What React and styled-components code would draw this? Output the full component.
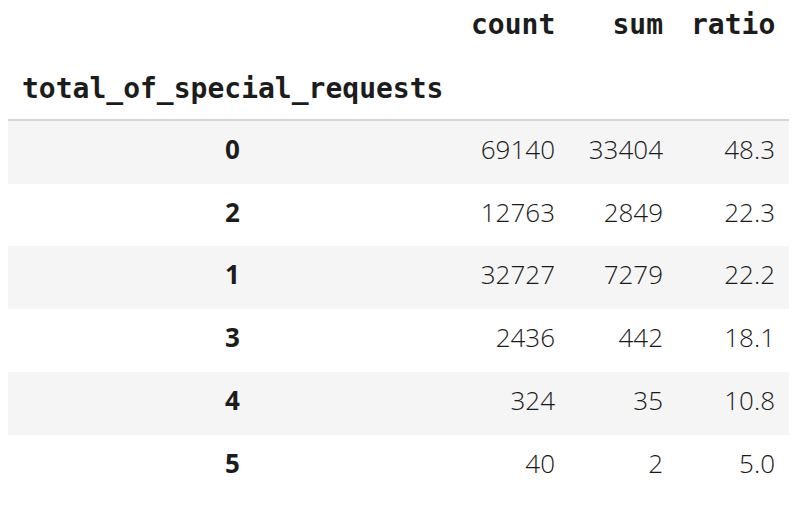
import styled, { createGlobalStyle } from "styled-components";

const GlobalStyle = createGlobalStyle`
  body {
    margin: 0 8px;
    background: #ffffff;
    color: #212121;
  }
`;

const rows = [
  { idx: 0, count: 69140, sum: 33404, ratio: "48.3" },
  { idx: 2, count: 12763, sum: 2849, ratio: "22.3" },
  { idx: 1, count: 32727, sum: 7279, ratio: "22.2" },
  { idx: 3, count: 2436, sum: 442, ratio: "18.1" },
  { idx: 4, count: 324, sum: 35, ratio: "10.8" },
  { idx: 5, count: 40, sum: 2, ratio: "5.0" },
];

function App() {
  return (
    <>
      <GlobalStyle />
      <Frame>
        <colgroup>
          <col style={{ width: 449 }} />
          <col style={{ width: 112 }} />
          <col style={{ width: 108 }} />
          <col style={{ width: 112 }} />
        </colgroup>
        <thead>
          <tr>
            <HeadCell $top />
            <HeadCell $top>count</HeadCell>
            <HeadCell $top>sum</HeadCell>
            <HeadCell $top>ratio</HeadCell>
          </tr>
          <IndexNameRow>
            <HeadCell $left>total_of_special_requests</HeadCell>
            <HeadCell />
            <HeadCell />
            <HeadCell />
          </IndexNameRow>
        </thead>
        <tbody>
          {rows.map((r, i) => (
            <Row key={r.idx} $striped={i % 2 === 0}>
              <IndexCell>{r.idx}</IndexCell>
              <Cell>{r.count}</Cell>
              <Cell>{r.sum}</Cell>
              <Cell>{r.ratio}</Cell>
            </Row>
          ))}
        </tbody>
      </Frame>
    </>
  );
}

const Frame = styled.table`
  width: 781px;
  table-layout: fixed;
  border-collapse: collapse;
  border-spacing: 0;
`;

const HeadCell = styled.th`
  font-family: "DejaVu Sans Mono", "Liberation Mono", monospace;
  font-weight: bold;
  font-size: 28px;
  line-height: 36px;
  color: #1c1c1c;
  text-align: ${(p) => (p.$left ? "left" : "right")};
  padding: ${(p) => (p.$top ? "7px 14px 14px" : "14px 14px 12px")};
  white-space: nowrap;
`;

const IndexNameRow = styled.tr`
  border-bottom: 2px solid #d4d4d4;
`;

const Row = styled.tr`
  background: ${(p) => (p.$striped ? "#f5f5f5" : "#ffffff")};
`;

const Cell = styled.td`
  font-family: "Open Sans", "Noto Sans", sans-serif;
  font-weight: 350;
  font-size: 26px;
  line-height: 36.7px;
  color: #1a1a1a;
  text-align: right;
  padding: 10px 14px 16px;
  white-space: nowrap;
`;

const IndexCell = styled.th`
  font-family: "Open Sans", "Noto Sans", sans-serif;
  font-weight: 700;
  font-size: 26px;
  line-height: 36.7px;
  color: #1c1c1c;
  text-align: center;
  padding: 10px 14px 16px;
`;

export default App;
